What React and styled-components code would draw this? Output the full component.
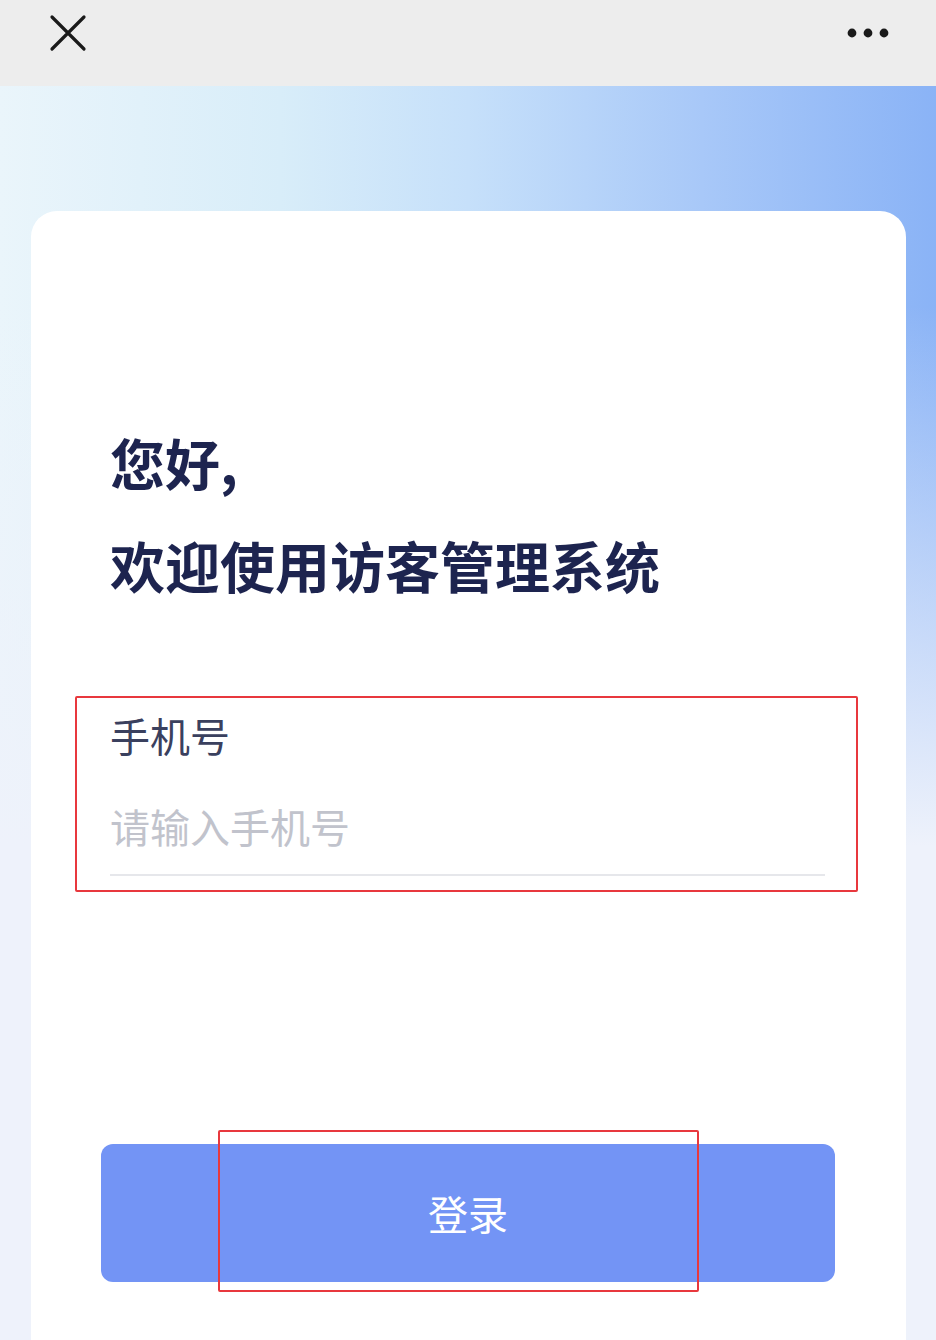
import React from "react";
import styled, { createGlobalStyle } from "styled-components";

const GlobalStyle = createGlobalStyle`
    html, body {
        margin: 0;
        padding: 0;
        font-family: "Noto Sans CJK SC", "Noto Sans", sans-serif;
    }
`;

const Page = styled("div")`
    display: flex;
    flex-direction: column;
    height: 1340px;
    overflow: hidden;
    width: 936px;
`;

const TopBar = styled("div")`
    align-items: center;
    background: #ededed;
    box-sizing: border-box;
    display: flex;
    flex-shrink: 0;
    height: 86px;
    justify-content: space-between;
    padding: 0 46px 20px 48px;
`;

const IconButton = styled("div")`
    align-items: center;
    display: flex;
    height: 40px;
    justify-content: center;
    width: ${(props) => props.width || "40px"};
`;

const Body = styled("div")`
    background:
        linear-gradient(180deg, rgba(238, 242, 251, 0) 0px, rgba(238, 242, 251, 0) 220px, #eef2fb 760px),
        linear-gradient(90deg, #eaf5fb 0%, #d8edf9 30%, #c6e0fa 50%, #a8c8f8 75%, #8ab3f6 100%);
    box-sizing: border-box;
    flex: 1;
    padding: 125px 30px 0 31px;
`;

const Card = styled("div")`
    background: #ffffff;
    border-radius: 26px 26px 0 0;
    box-sizing: border-box;
    height: 100%;
    padding: 199px 0 0 0;
    position: relative;
`;

const Title = styled("h1")`
    color: #1d244f;
    font-size: 55px;
    font-weight: 700;
    line-height: 103px;
    margin: 0;
    padding-left: 79px;
`;

const FieldBox = styled("div")`
    border: 2px solid #e8383d;
    border-radius: 2px;
    box-sizing: border-box;
    height: 196px;
    margin: 80px 48px 0 44px;
    padding: 10px 31px 0 33px;
`;

const Label = styled("div")`
    color: #3a405e;
    font-size: 40px;
    line-height: 54px;
`;

const Input = styled("input")`
    background: transparent;
    border: 0;
    border-bottom: 2px solid #e6e7eb;
    box-sizing: border-box;
    color: #3a405e;
    display: block;
    font-family: "Noto Sans CJK SC", "Noto Sans", sans-serif;
    font-size: 40px;
    height: 104px;
    margin-top: 10px;
    outline: none;
    padding: 10px 0 4px 0;
    width: 100%;

    &::placeholder {
        color: #c1c3cc;
    }
`;

const ButtonRow = styled("div")`
    margin: 252px 71px 0 70px;
    position: relative;
`;

const LoginButton = styled("button")`
    background: #7394f5;
    border: 0;
    border-radius: 12px;
    color: #ffffff;
    display: block;
    font-family: "Noto Sans CJK SC", "Noto Sans", sans-serif;
    font-size: 40px;
    height: 138px;
    width: 100%;
`;

const Highlight = styled("div")`
    border: 2px solid #e8383d;
    border-radius: 2px;
    bottom: -10px;
    box-sizing: border-box;
    left: 117px;
    pointer-events: none;
    position: absolute;
    top: -14px;
    width: 481px;
`;

const App = () => {
    return (
        <Page>
            <GlobalStyle />
            <TopBar>
                <IconButton>
                    <svg width="38" height="38" viewBox="0 0 38 38">
                        <path
                            d="M3 3 L35 35 M35 3 L3 35"
                            stroke="#1a1a1a"
                            strokeWidth="3.2"
                            strokeLinecap="round"
                        />
                    </svg>
                </IconButton>
                <IconButton width="44px">
                    <svg width="42" height="12" viewBox="0 0 42 12">
                        <circle cx="5" cy="6" r="4.4" fill="#1a1a1a" />
                        <circle cx="21" cy="6" r="4.4" fill="#1a1a1a" />
                        <circle cx="37" cy="6" r="4.4" fill="#1a1a1a" />
                    </svg>
                </IconButton>
            </TopBar>
            <Body>
                <Card>
                    <Title>
                        您好,
                        <br />
                        欢迎使用访客管理系统
                    </Title>
                    <FieldBox>
                        <Label>手机号</Label>
                        <Input type="tel" placeholder="请输入手机号" />
                    </FieldBox>
                    <ButtonRow>
                        <LoginButton>登录</LoginButton>
                        <Highlight />
                    </ButtonRow>
                </Card>
            </Body>
        </Page>
    );
};

export default App;
